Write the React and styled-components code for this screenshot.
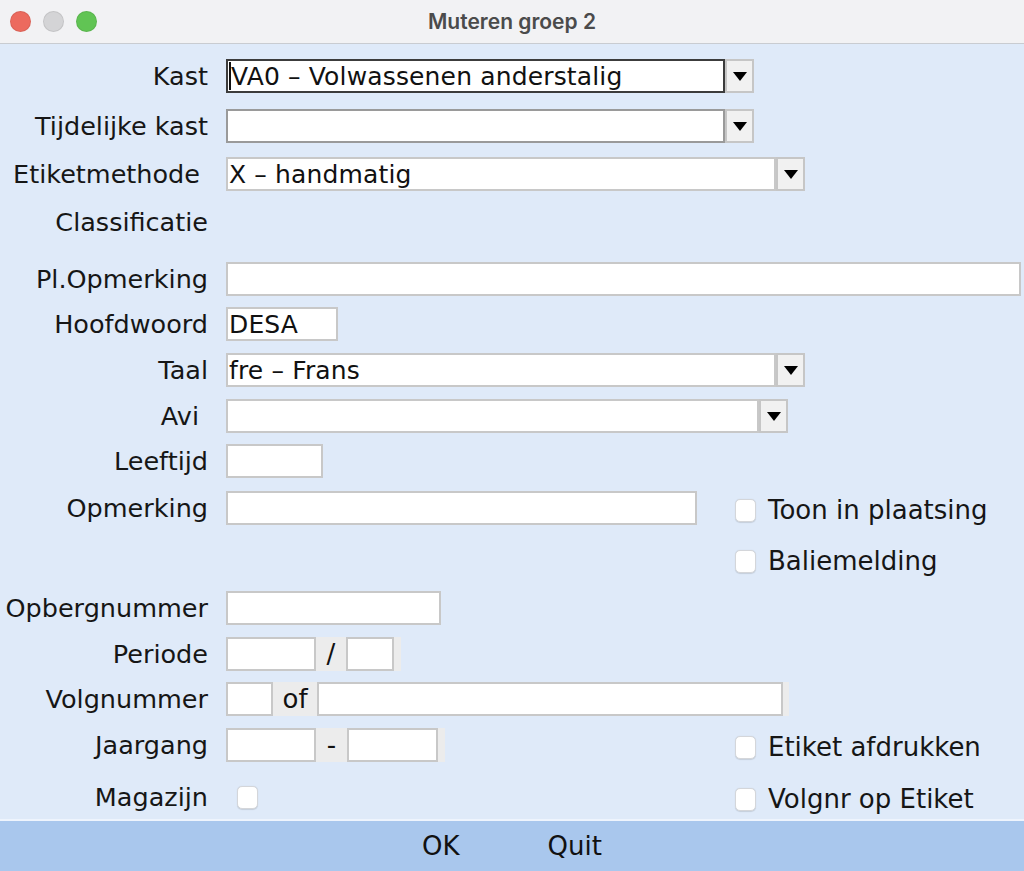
import React from 'react';
import styled, { createGlobalStyle } from 'styled-components';

const GlobalStyle = createGlobalStyle`
	html, body {
		margin: 0;
		padding: 0;
	}
	body {
		font-family: "DejaVu Sans", "Noto Sans", sans-serif;
		background: #dfeaf9;
	}
`;

const Window = styled.div`
	width: 1024px;
	height: 871px;
	display: flex;
	flex-direction: column;
	background: #dfeaf9;
	overflow: hidden;
`;

const TitleBar = styled.div`
	flex: none;
	height: 44px;
	box-sizing: border-box;
	display: grid;
	grid-template-columns: 1fr auto 1fr;
	align-items: center;
	background: #f2f2f4;
	border-bottom: 1px solid #c9ccd1;
`;

const Lights = styled.div`
	display: flex;
	gap: 12px;
	padding-left: 10px;
`;

const Dot = styled.span`
	width: 21px;
	height: 21px;
	border-radius: 50%;
	background: ${({ $color }) => $color};
	box-shadow: inset 0 0 0 1px rgba(0, 0, 0, 0.08);
`;

const Title = styled.div`
	font-family: Inter, "DejaVu Sans", sans-serif;
	font-weight: 600;
	font-size: 21px;
	color: #4b4b4b;
`;

const Form = styled.div`
	flex: 1;
	display: flex;
	flex-direction: column;
`;

const Row = styled.div`
	display: grid;
	grid-template-columns: 208px 527px 1fr;
	align-items: center;
	height: 34px;
	margin-top: ${({ $mt }) => $mt}px;
`;

const Label = styled.div`
	text-align: right;
	font-size: 25.5px;
	color: #161616;
	white-space: nowrap;
	padding-right: ${({ $pad }) => $pad || 0}px;
`;

const Main = styled.div`
	display: flex;
	align-items: center;
	padding-left: 18px;
	grid-column: ${({ $span }) => ($span ? '2 / -1' : 'auto')};
`;

const Side = styled.div`
	grid-column: 3;
	display: flex;
	align-items: center;
	margin-top: ${({ $shift }) => $shift || 0}px;
`;

const Field = styled.div`
	box-sizing: border-box;
	width: ${({ $w }) => $w}px;
	height: 34px;
	background: #fff;
	border: 2px solid ${({ $border }) => $border || '#c8c8c8'};
	display: flex;
	align-items: center;
	font-size: 25px;
	letter-spacing: 0.15px;
	color: #111;
	white-space: nowrap;
	overflow: hidden;
	padding-left: 1px;
`;

const Caret = styled.span`
	width: 2px;
	height: 28px;
	background: #111;
`;

const Combo = styled.div`
	display: flex;
	align-items: stretch;
	height: 34px;
`;

const ArrowButton = styled.div`
	box-sizing: border-box;
	width: 29px;
	background: #f1f1f1;
	border: 2px solid #c6c6c6;
	display: flex;
	align-items: center;
	justify-content: center;
`;

const Group = styled.div`
	display: flex;
	align-items: center;
	background: #ececec;
	padding-right: ${({ $pr }) => $pr}px;
	height: 34px;
`;

const Sep = styled.span`
	width: ${({ $w }) => $w}px;
	text-align: center;
	font-size: 26px;
	color: #111;
`;

const CheckLabel = styled.label`
	display: flex;
	align-items: center;
	gap: 12px;
	font-size: 26px;
	color: #161616;
	white-space: nowrap;
	margin-left: ${({ $ml }) => $ml || 0}px;
`;

const Box = styled.span`
	box-sizing: border-box;
	width: 21px;
	height: 23px;
	border-radius: 5px;
	background: #fff;
	border: 1px solid #d4d6da;
	box-shadow: 0 0.5px 1px rgba(0, 0, 0, 0.12);
`;

const ButtonBar = styled.div`
	flex: none;
	height: 52px;
	box-sizing: border-box;
	background: #a9c7ed;
	border-top: 2px solid #eef4fd;
	display: flex;
	align-items: center;
	justify-content: center;
	gap: 88px;
`;

const BarButton = styled.span`
	font-size: 26px;
	color: #111;
`;

const Arrow = () => (
	<svg width="14" height="9" viewBox="0 0 14 9">
		<polygon points="0,0 14,0 7,9" fill="#000" />
	</svg>
);

const ComboBox = ({ width, value, border, caret }) => (
	<Combo>
		<Field $w={width} $border={border}>
			{caret && <Caret />}
			{value}
		</Field>
		<ArrowButton>
			<Arrow />
		</ArrowButton>
	</Combo>
);

const Check = ({ children, ml }) => (
	<CheckLabel $ml={ml}>
		<Box />
		{children}
	</CheckLabel>
);

const App = () => {
	return (
		<>
			<GlobalStyle />
			<Window>
				<TitleBar>
					<Lights>
						<Dot $color="#ec6a5e" />
						<Dot $color="#d4d4d6" />
						<Dot $color="#61c454" />
					</Lights>
					<Title>Muteren groep 2</Title>
					<span />
				</TitleBar>
				<Form>
					<Row $mt={15}>
						<Label>Kast</Label>
						<Main $span>
							<ComboBox width={499} value="VA0 – Volwassenen anderstalig" border="#3c3c3c" caret />
						</Main>
					</Row>
					<Row $mt={16}>
						<Label>Tijdelijke kast</Label>
						<Main $span>
							<ComboBox width={499} value="" border="#9a9a9a" />
						</Main>
					</Row>
					<Row $mt={14}>
						<Label $pad={8}>Etiketmethode</Label>
						<Main $span>
							<ComboBox width={550} value="X – handmatig" />
						</Main>
					</Row>
					<Row $mt={14}>
						<Label>Classificatie</Label>
					</Row>
					<Row $mt={23}>
						<Label>Pl.Opmerking</Label>
						<Main $span>
							<Field $w={795} />
						</Main>
					</Row>
					<Row $mt={11}>
						<Label>Hoofdwoord</Label>
						<Main>
							<Field $w={112}>DESA</Field>
						</Main>
					</Row>
					<Row $mt={12}>
						<Label>Taal</Label>
						<Main $span>
							<ComboBox width={550} value="fre – Frans" />
						</Main>
					</Row>
					<Row $mt={12}>
						<Label $pad={9}>Avi</Label>
						<Main $span>
							<ComboBox width={533} value="" />
						</Main>
					</Row>
					<Row $mt={11}>
						<Label>Leeftijd</Label>
						<Main>
							<Field $w={97} />
						</Main>
					</Row>
					<Row $mt={12}>
						<Label>Opmerking</Label>
						<Main>
							<Field $w={471} />
						</Main>
						<Side $shift={5}>
							<Check>Toon in plaatsing</Check>
						</Side>
					</Row>
					<Row $mt={20}>
						<Side>
							<Check>Baliemelding</Check>
						</Side>
					</Row>
					<Row $mt={13}>
						<Label>Opbergnummer</Label>
						<Main>
							<Field $w={215} />
						</Main>
					</Row>
					<Row $mt={12}>
						<Label>Periode</Label>
						<Main>
							<Group $pr={7}>
								<Field $w={90} />
								<Sep $w={30}>/</Sep>
								<Field $w={48} />
							</Group>
						</Main>
					</Row>
					<Row $mt={11}>
						<Label>Volgnummer</Label>
						<Main $span>
							<Group $pr={6}>
								<Field $w={47} />
								<Sep $w={44}>of</Sep>
								<Field $w={466} />
							</Group>
						</Main>
					</Row>
					<Row $mt={12}>
						<Label>Jaargang</Label>
						<Main>
							<Group $pr={7}>
								<Field $w={90} />
								<Sep $w={31}>-</Sep>
								<Field $w={91} />
							</Group>
						</Main>
						<Side $shift={4}>
							<Check>Etiket afdrukken</Check>
						</Side>
					</Row>
					<Row $mt={18}>
						<Label>Magazijn</Label>
						<Main>
							<CheckLabel $ml={11}>
								<Box />
							</CheckLabel>
						</Main>
						<Side $shift={4}>
							<Check>Volgnr op Etiket</Check>
						</Side>
					</Row>
				</Form>
				<ButtonBar>
					<BarButton>OK</BarButton>
					<BarButton>Quit</BarButton>
				</ButtonBar>
			</Window>
		</>
	);
};

export default App;
